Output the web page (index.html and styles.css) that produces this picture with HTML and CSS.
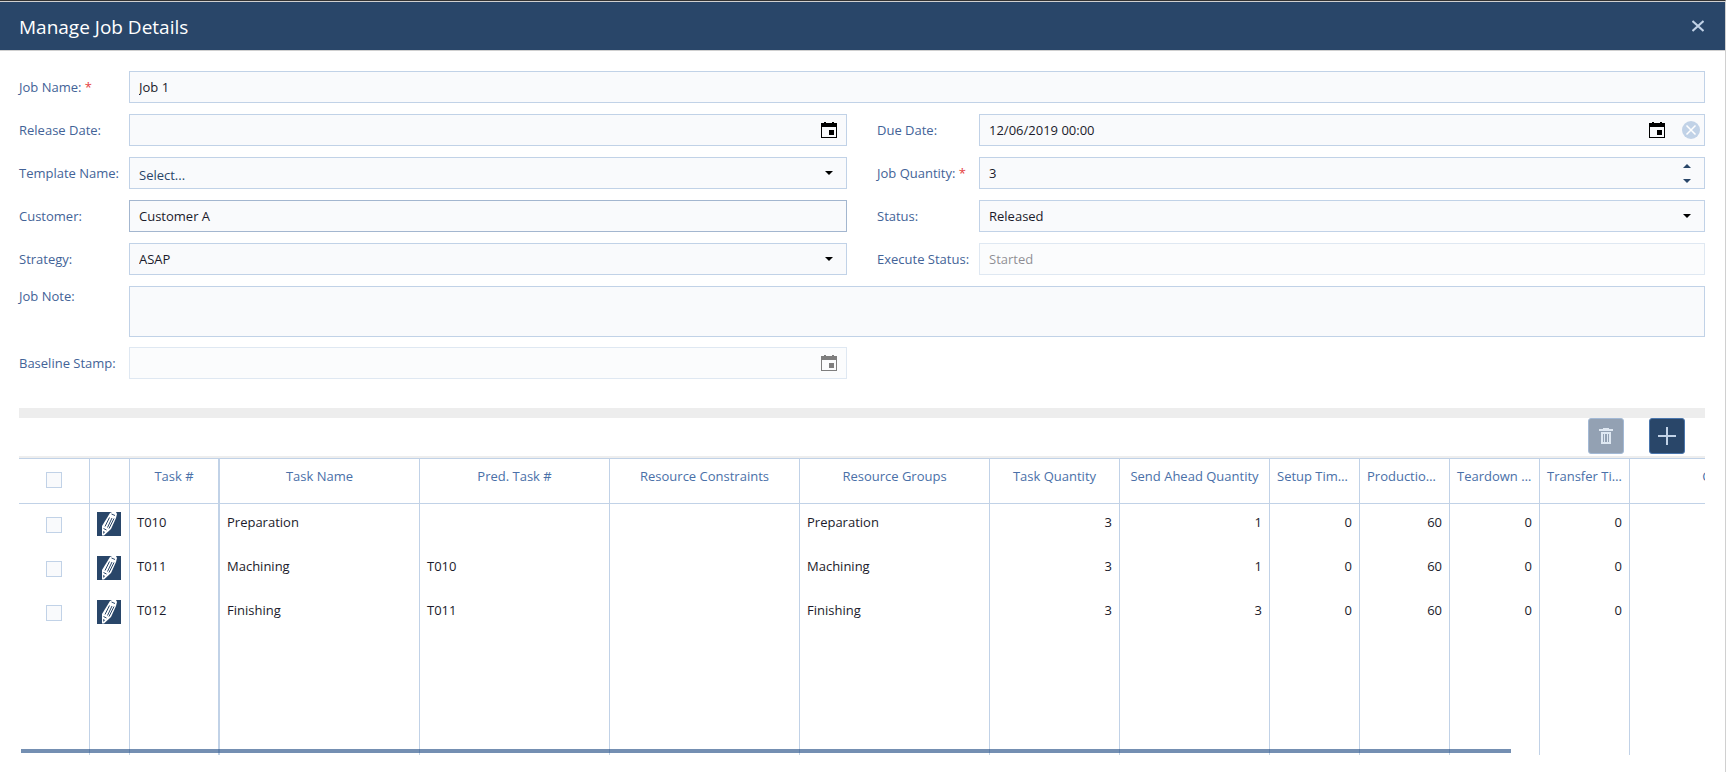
FILE: index.html
```html
<!DOCTYPE html>
<html lang="en">
<head>
    <meta charset="UTF-8">
    <meta name="viewport" content="width=device-width, initial-scale=1.0">
    <title>Manage Job Details</title>
    <link rel="stylesheet" href="styles.css">
</head>
<body>
    <svg class="sprite" aria-hidden="true">
        <symbol id="calendar" viewBox="0 0 16 16">
            <path fill="currentColor" fill-rule="evenodd" d="M0 1h3V0h2v1h6V0h2v1h3v15H0zM1 5v10h14V5zM8 8h5v5H8z"/>
        </symbol>
        <symbol id="pencil" viewBox="0 0 24 24">
            <path fill="#fff" d="M13 1l2-1h4l1 2-1 4-5 11-7 6.500H5L5 14z"/>
            <path fill="none" stroke="#294669" stroke-width="1" d="M14.500 2l3.500 1.500M12.500 5.500l-4.500 9M15 6l-4.500 9.500M17 6.500l-5 10M6.500 16.500l3 1.500"/>
            <path fill="#294669" d="M6 19l2 1-1.500 2z"/>
        </symbol>
    </svg>
    <div class="dialog">
        <header class="titlebar">
            <h1>Manage Job Details</h1>
            <button type="button" class="close" aria-label="Close">
                <svg viewBox="0 0 12 12" width="12" height="12"><path fill="none" stroke="currentColor" stroke-width="2" d="M0.500 1l11 10M11.500 1l-11 10"/></svg>
            </button>
        </header>

        <main class="content">
            <form class="form">
                <div class="row wide">
                    <label for="jobName">Job Name: <span class="required">*</span></label>
                    <div class="box"><input type="text" id="jobName" value="Job 1"></div>
                </div>
                <div class="row left">
                    <label for="releaseDate">Release Date:</label>
                    <div class="box">
                        <input type="text" id="releaseDate">
                        <button type="button" class="icon-btn" aria-label="Pick release date"><svg width="16" height="16"><use href="#calendar"/></svg></button>
                    </div>
                </div>
                <div class="row right">
                    <label for="dueDate">Due Date:</label>
                    <div class="box">
                        <input type="text" id="dueDate" value="12/06/2019 00:00">
                        <button type="button" class="icon-btn" aria-label="Pick due date"><svg width="16" height="16"><use href="#calendar"/></svg></button>
                        <button type="button" class="clear" aria-label="Clear">
                            <svg viewBox="0 0 18 18" width="18" height="18"><circle cx="9" cy="9" r="9" fill="#c1d2e7"/><path fill="none" stroke="#fff" stroke-width="1.500" d="M4.500 4.500l9 9M13.500 4.500l-9 9"/></svg>
                        </button>
                    </div>
                </div>
                <div class="row left">
                    <label for="template">Template Name:</label>
                    <div class="box drop">
                        <select id="template" class="placeholder"><option>Select...</option></select>
                    </div>
                </div>
                <div class="row right">
                    <label for="quantity">Job Quantity: <span class="required">*</span></label>
                    <div class="box">
                        <input type="text" inputmode="numeric" id="quantity" value="3">
                        <div class="spin">
                            <button type="button" class="up" aria-label="Increase"></button>
                            <button type="button" class="down" aria-label="Decrease"></button>
                        </div>
                    </div>
                </div>
                <div class="row left">
                    <label for="customer">Customer:</label>
                    <div class="box hover"><input type="text" id="customer" value="Customer A"></div>
                </div>
                <div class="row right">
                    <label for="status">Status:</label>
                    <div class="box drop">
                        <select id="status"><option>Released</option></select>
                    </div>
                </div>
                <div class="row left">
                    <label for="strategy">Strategy:</label>
                    <div class="box drop">
                        <select id="strategy"><option>ASAP</option></select>
                    </div>
                </div>
                <div class="row right">
                    <label for="execStatus">Execute Status:</label>
                    <div class="box disabled"><input type="text" id="execStatus" value="Started" disabled></div>
                </div>
                <div class="row wide note">
                    <label for="jobNote">Job Note:</label>
                    <div class="box"><textarea id="jobNote"></textarea></div>
                </div>
                <div class="row left">
                    <label for="baseline">Baseline Stamp:</label>
                    <div class="box disabled">
                        <input type="text" id="baseline" disabled>
                        <button type="button" class="icon-btn" aria-label="Pick baseline stamp" disabled><svg width="16" height="16"><use href="#calendar"/></svg></button>
                    </div>
                </div>
            </form>

            <div class="splitter"></div>

            <div class="toolbar">
                <button type="button" class="tool" aria-label="Delete" disabled>
                    <svg viewBox="0 0 16 18" width="16" height="18"><path fill="#c1d2e7" d="M5 1h6v1h4v2H1V2h4zM3 5h10v12H3z"/><path fill="#294669" d="M5 7h1v8H5zM7 7h2v8H7zM10 7h1v8h-1z"/></svg>
                </button>
                <button type="button" class="tool" aria-label="Add">
                    <svg viewBox="0 0 20 20" width="20" height="20"><path fill="#c1d2e7" d="M9 1h2v8h8v2h-8v8H9v-8H1V9h8z"/></svg>
                </button>
            </div>

            <div class="grid">
                <table>
                    <colgroup>
                        <col class="c-check"><col class="c-edit"><col class="c-small"><col class="c-name">
                        <col class="c-mid"><col class="c-mid"><col class="c-mid"><col class="c-qty"><col class="c-ahead">
                        <col class="c-small"><col class="c-small"><col class="c-small"><col class="c-small"><col class="c-last">
                    </colgroup>
                    <thead>
                        <tr>
                            <th><input type="checkbox" aria-label="Select all"></th>
                            <th></th>
                            <th class="fixed">Task #</th>
                            <th>Task Name</th>
                            <th>Pred. Task #</th>
                            <th>Resource Constraints</th>
                            <th>Resource Groups</th>
                            <th>Task Quantity</th>
                            <th>Send Ahead Quantity</th>
                            <th>Setup Time (min)</th>
                            <th>Production Time</th>
                            <th>Teardown Time</th>
                            <th>Transfer Time</th>
                            <th>Colour</th>
                        </tr>
                    </thead>
                    <tbody>
                        <tr>
                            <td class="check"><input type="checkbox" aria-label="Select T010"></td>
                            <td class="edit"><button type="button" aria-label="Edit T010"><svg width="24" height="24"><use href="#pencil"/></svg></button></td>
                            <td class="fixed">T010</td><td>Preparation</td><td></td><td></td><td>Preparation</td>
                            <td class="num">3</td><td class="num">1</td><td class="num">0</td><td class="num">60</td><td class="num">0</td><td class="num">0</td><td></td>
                        </tr>
                        <tr>
                            <td class="check"><input type="checkbox" aria-label="Select T011"></td>
                            <td class="edit"><button type="button" aria-label="Edit T011"><svg width="24" height="24"><use href="#pencil"/></svg></button></td>
                            <td class="fixed">T011</td><td>Machining</td><td>T010</td><td></td><td>Machining</td>
                            <td class="num">3</td><td class="num">1</td><td class="num">0</td><td class="num">60</td><td class="num">0</td><td class="num">0</td><td></td>
                        </tr>
                        <tr>
                            <td class="check"><input type="checkbox" aria-label="Select T012"></td>
                            <td class="edit"><button type="button" aria-label="Edit T012"><svg width="24" height="24"><use href="#pencil"/></svg></button></td>
                            <td class="fixed">T012</td><td>Finishing</td><td>T011</td><td></td><td>Finishing</td>
                            <td class="num">3</td><td class="num">3</td><td class="num">0</td><td class="num">60</td><td class="num">0</td><td class="num">0</td><td></td>
                        </tr>
                        <!-- keeps the column lines running to the bottom -->
                        <tr class="filler">
                            <td></td><td></td><td class="fixed"></td><td></td><td></td><td></td><td></td><td></td><td></td><td></td><td></td><td></td><td></td><td></td>
                        </tr>
                    </tbody>
                </table>
                <div class="scrollbar"></div>
            </div>
        </main>
    </div>
</body>
</html>
```

FILE: styles.css
```css
* {
    box-sizing: border-box;
}
body {
    margin: 0;
    font-family: 'Segoe UI', 'Open Sans', sans-serif;
    font-size: 13px;
    line-height: 20px;
    color: #1b1b2b;
    background-color: #fff;
}
button, input, select, textarea {
    font: inherit;
    color: inherit;
    margin: 0;
    padding: 0;
    border: none;
    background: none;
}
button {
    display: flex;
    align-items: center;
    justify-content: center;
    cursor: pointer;
}
.sprite {
    display: none;
}
.dialog {
    display: flex;
    flex-direction: column;
    min-height: 100vh;
    border-top: 1px solid #333;
    border-right: 1px solid #d0d0d0;
}
.titlebar {
    display: flex;
    align-items: center;
    justify-content: space-between;
    height: 50px;
    padding: 0 19px;
    color: #fff;
    background-color: #294669;
    border-top: 1px solid #d0d0d0;
    border-bottom: 1px solid #d0d0d0;
}
.titlebar h1 {
    margin: 0;
    padding-top: 2px;
    font-size: 19px;
    font-weight: 400;
    line-height: 28px;
}
.close {
    width: 16px;
    height: 28px;
    color: #c1d2e7;
}
.content {
    display: flex;
    flex-direction: column;
    flex: 1;
    padding: 20px 20px 17px 19px;
}

/* form */
.form {
    display: grid;
    grid-template-columns: 1fr 1fr;
    row-gap: 11px;
}
.row {
    display: flex;
    align-items: center;
    min-width: 0;
}
.row label {
    flex: none;
    width: 110px;
    color: #436397;
    white-space: nowrap;
}
.wide {
    grid-column: 1 / -1;
}
.left {
    grid-column: 1;
    padding-right: 15px;
}
.right {
    grid-column: 2;
    padding-left: 15px;
}
.right label {
    width: 102px;
}
.required {
    color: #e53e3e;
}
.box {
    position: relative;
    display: flex;
    align-items: center;
    flex: 1;
    min-width: 0;
    height: 32px;
    border: 1px solid #c1d2e7;
    background-color: #f9fafc;
}
.box input, .box select, .box textarea {
    flex: 1;
    min-width: 0;
    height: 100%;
    padding: 0 9px;
    outline: none;
    appearance: none;
    resize: none;
}
.box select.placeholder {
    padding-top: 4px;
    color: #294669;
}
.hover {
    border-color: #a3b6cf;
}
.disabled {
    opacity: 0.5;
}
.note {
    align-items: flex-start;
    margin-bottom: -1px;
}
.note .box {
    height: 51px;
}
.icon-btn {
    width: 34px;
    height: 30px;
    color: #000;
}
.clear {
    justify-content: flex-end;
    width: 30px;
    height: 30px;
    padding-right: 4px;
}
.drop::after {
    content: '';
    position: absolute;
    right: 13px;
    top: 13px;
    border: 4px solid transparent;
    border-top-color: #000;
    border-bottom: none;
    pointer-events: none;
}
.spin {
    display: flex;
    flex-direction: column;
    width: 34px;
}
.spin button {
    height: 15px;
}
.spin button::before {
    content: '';
    border: 4px solid transparent;
}
.spin .up::before {
    border-top: none;
    border-bottom-color: #294669;
}
.spin .down::before {
    border-top-color: #294669;
    border-bottom: none;
}

/* task list */
.splitter {
    height: 10px;
    margin-top: 29px;
    background-color: #ededed;
}
.toolbar {
    display: flex;
    justify-content: flex-end;
    gap: 25px;
    height: 40px;
    padding-right: 20px;
    border-bottom: 2px solid #eee;
}
.tool {
    width: 36px;
    height: 36px;
    border: 1px solid #4a76ad;
    border-radius: 3px;
    background-color: #294669;
}
.tool:disabled {
    opacity: 0.5;
}
.grid {
    position: relative;
    display: flex;
    flex: 1;
    overflow: hidden;
    border-top: 1px solid #c1d2e7;
}
table {
    flex: none;
    width: 1797px;
    table-layout: fixed;
    border-collapse: separate;
    border-spacing: 0;
}
.c-check { width: 71px; }
.c-edit { width: 40px; }
.c-small { width: 90px; }
.c-name { width: 200px; }
.c-mid { width: 190px; }
.c-qty { width: 130px; }
.c-ahead { width: 150px; }
.c-last { width: 186px; }
th, td {
    border-right: 1px solid #c1d2e7;
    text-align: left;
    vertical-align: top;
    white-space: nowrap;
    overflow: hidden;
    text-overflow: ellipsis;
}
th {
    height: 45px;
    padding: 7px 7px 0;
    border-bottom: 1px solid #c1d2e7;
    color: #4a70a8;
    font-weight: 400;
    text-align: center;
}
td {
    height: 44px;
    padding: 8px 7px 0;
}
.fixed {
    border-right-width: 2px;
}
.num {
    text-align: right;
}
.check {
    padding-top: 13px;
    text-align: center;
}
.edit button {
    width: 24px;
    height: 24px;
    background-color: #294669;
}
.filler td {
    height: auto;
}
th input, td input {
    display: block;
    width: 16px;
    height: 16px;
    margin: 0 auto;
    appearance: none;
    border: 1px solid #c1d2e7;
    background-color: #f9fafc;
}
th input {
    margin-top: 6px;
}
.scrollbar {
    position: absolute;
    left: 2px;
    bottom: 2px;
    width: 88.4%;
    height: 4px;
    background-color: rgba(41, 83, 137, 0.65);
}
```
